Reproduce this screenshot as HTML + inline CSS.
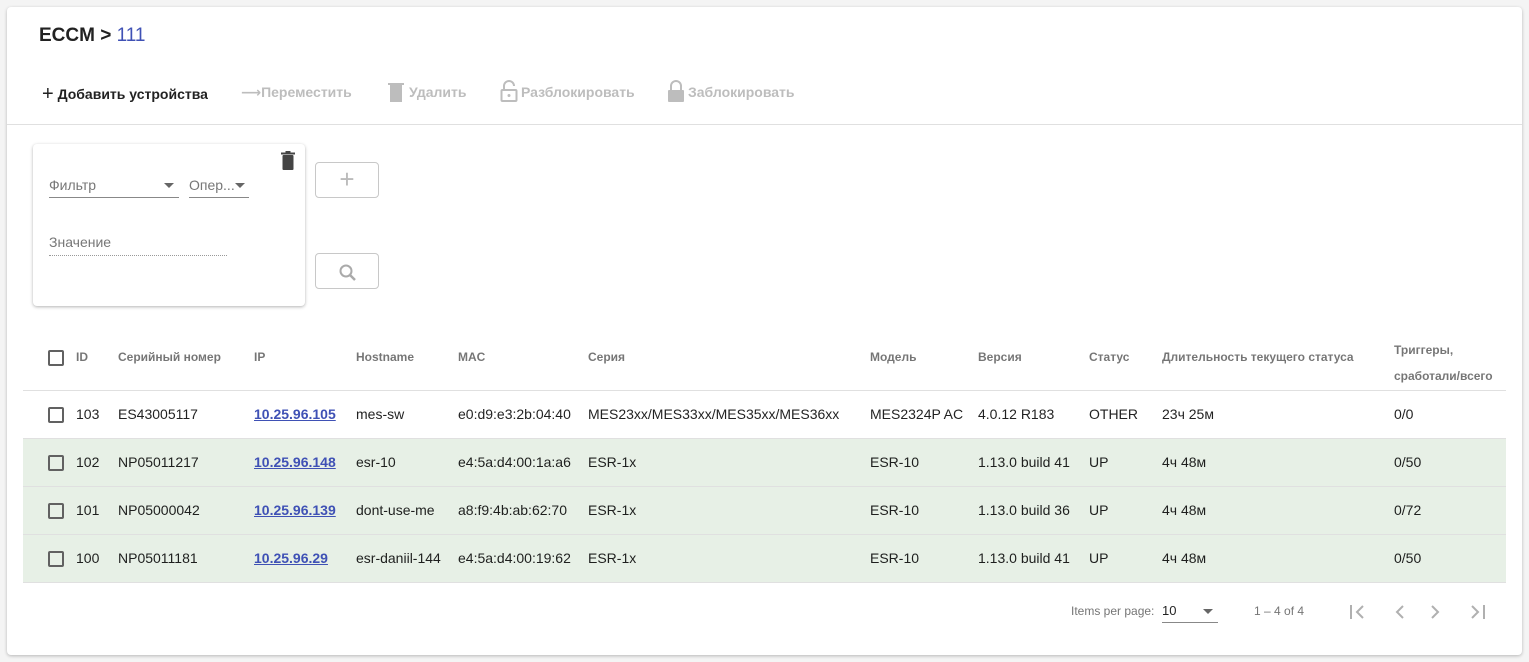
<!DOCTYPE html>
<html><head><meta charset="utf-8"><style>
*{margin:0;padding:0;box-sizing:border-box}
body{width:1529px;height:662px;background:#f4f4f4;font-family:"Liberation Sans","DejaVu Sans",sans-serif;position:relative;overflow:hidden;color:rgba(0,0,0,.87)}
.card{position:absolute;left:7px;top:7px;width:1515px;height:648px;background:#fff;border-radius:4px;box-shadow:0 1px 3px rgba(0,0,0,.25)}
.a{position:absolute;white-space:nowrap}
.tb{font-size:14px;font-weight:bold;color:#bdbdbd;top:84px}
.hd{font-size:12px;color:rgba(0,0,0,.54);font-weight:bold}
.row{position:absolute;left:23px;width:1483px;height:48px;border-bottom:1px solid #e0e0e0}
.g{background:#e7f0e6}
.c{position:absolute;top:15px;font-size:14px;white-space:nowrap}
.cb{position:absolute;left:25px;top:16px;width:16px;height:16px;border:2px solid #616161;border-radius:2px}
.ip{color:#3f51b5;text-decoration:underline;font-weight:bold}
.btn{position:absolute;left:315px;width:64px;height:36px;border:1px solid #c8c8c8;border-radius:4px;background:#fff}
</style></head><body>
<div class="card"></div>
<div class="a" style="left:39px;top:25px;font-size:19px;font-weight:bold;color:#222">ECCM &gt; <span style="color:#3f51b5;font-weight:normal">111</span></div>
<div class="a" style="left:42px;top:82px;font-size:14px;font-weight:bold;color:#222"><span style="font-size:20px;font-weight:normal;position:relative;top:1px">+</span> Добавить устройства</div>
<div class="a tb" style="left:241px">⟶Переместить</div>
<svg class="a" style="left:388px;top:82px" width="16" height="20"><rect x="2" y="3" width="12" height="17" fill="#bdbdbd"/><rect x="0" y="1" width="16" height="2" fill="#bdbdbd"/></svg>
<div class="a tb" style="left:409px">Удалить</div>
<svg class="a" style="left:500px;top:80px" width="18" height="22"><path d="M4 10V6a5 5 0 0 1 10 0" stroke="#bdbdbd" stroke-width="2" fill="none"/><rect x="1.5" y="10" width="15" height="11" rx="1" stroke="#bdbdbd" stroke-width="2" fill="none"/><circle cx="9" cy="15.5" r="1.5" fill="#bdbdbd"/></svg>
<div class="a tb" style="left:521px">Разблокировать</div>
<svg class="a" style="left:667px;top:80px" width="18" height="22"><path d="M4 10V6a5 5 0 0 1 10 0V10" stroke="#bdbdbd" stroke-width="2" fill="none"/><rect x="1" y="10" width="16" height="12" rx="1" fill="#bdbdbd"/></svg>
<div class="a tb" style="left:688px">Заблокировать</div>
<div class="a" style="left:7px;top:124px;width:1515px;height:1px;background:#e0e0e0"></div>

<div class="a" style="left:33px;top:144px;width:272px;height:162px;background:#fff;border-radius:4px;box-shadow:0 1px 3px rgba(0,0,0,.3)"></div>
<svg class="a" style="left:281px;top:151px" width="14" height="19"><rect x="1.5" y="4" width="11" height="15" rx="1" fill="#444"/><rect x="0" y="1.5" width="14" height="2" fill="#444"/><rect x="4.5" y="0" width="5" height="2" fill="#444"/></svg>
<div class="a" style="left:49px;top:177px;font-size:14px;color:#777">Фильтр</div>
<div class="a" style="left:164px;top:183px;border:5px solid transparent;border-top-color:#666"></div>
<div class="a" style="left:49px;top:197px;width:130px;height:1px;background:#888"></div>
<div class="a" style="left:189px;top:177px;font-size:14px;color:#777">Опер...</div>
<div class="a" style="left:235px;top:183px;border:5px solid transparent;border-top-color:#666"></div>
<div class="a" style="left:189px;top:197px;width:60px;height:1px;background:#888"></div>
<div class="a" style="left:49px;top:234px;font-size:14px;color:#777">Значение</div>
<div class="a" style="left:49px;top:255px;width:178px;border-top:1px dotted #999"></div>
<div class="btn" style="top:162px;text-align:center;font-size:26px;color:#bbb;line-height:32px">+</div>
<div class="btn" style="top:253px"><svg style="position:absolute;left:22px;top:9px" width="20" height="20"><circle cx="8" cy="8" r="5.5" stroke="#aaa" stroke-width="2" fill="none"/><path d="M12 12l5 5" stroke="#aaa" stroke-width="2.5"/></svg></div>

<div class="row" style="top:330px;height:61px">
<div class="cb" style="top:20px"></div>
<div class="a hd" style="left:53px;top:20px">ID</div>
<div class="a hd" style="left:95px;top:20px">Серийный номер</div>
<div class="a hd" style="left:231px;top:20px">IP</div>
<div class="a hd" style="left:333px;top:20px">Hostname</div>
<div class="a hd" style="left:435px;top:20px">MAC</div>
<div class="a hd" style="left:565px;top:20px">Серия</div>
<div class="a hd" style="left:847px;top:20px">Модель</div>
<div class="a hd" style="left:955px;top:20px">Версия</div>
<div class="a hd" style="left:1066px;top:20px">Статус</div>
<div class="a hd" style="left:1139px;top:20px">Длительность текущего статуса</div>
<div class="a hd" style="left:1371px;top:7px;line-height:26px">Триггеры,<br>сработали/всего</div>
</div>

<div class="row" style="top:391px"><div class="cb"></div><div class="c" style="left:53px">103</div><div class="c" style="left:95px">ES43005117</div><div class="c ip" style="left:231px">10.25.96.105</div><div class="c" style="left:333px">mes-sw</div><div class="c" style="left:435px">e0:d9:e3:2b:04:40</div><div class="c" style="left:565px">MES23xx/MES33xx/MES35xx/MES36xx</div><div class="c" style="left:847px">MES2324P AC</div><div class="c" style="left:955px">4.0.12 R183</div><div class="c" style="left:1066px">OTHER</div><div class="c" style="left:1139px">23ч 25м</div><div class="c" style="left:1371px">0/0</div></div>
<div class="row g" style="top:439px"><div class="cb"></div><div class="c" style="left:53px">102</div><div class="c" style="left:95px">NP05011217</div><div class="c ip" style="left:231px">10.25.96.148</div><div class="c" style="left:333px">esr-10</div><div class="c" style="left:435px">e4:5a:d4:00:1a:a6</div><div class="c" style="left:565px">ESR-1x</div><div class="c" style="left:847px">ESR-10</div><div class="c" style="left:955px">1.13.0 build 41</div><div class="c" style="left:1066px">UP</div><div class="c" style="left:1139px">4ч 48м</div><div class="c" style="left:1371px">0/50</div></div>
<div class="row g" style="top:487px"><div class="cb"></div><div class="c" style="left:53px">101</div><div class="c" style="left:95px">NP05000042</div><div class="c ip" style="left:231px">10.25.96.139</div><div class="c" style="left:333px">dont-use-me</div><div class="c" style="left:435px">a8:f9:4b:ab:62:70</div><div class="c" style="left:565px">ESR-1x</div><div class="c" style="left:847px">ESR-10</div><div class="c" style="left:955px">1.13.0 build 36</div><div class="c" style="left:1066px">UP</div><div class="c" style="left:1139px">4ч 48м</div><div class="c" style="left:1371px">0/72</div></div>
<div class="row g" style="top:535px"><div class="cb"></div><div class="c" style="left:53px">100</div><div class="c" style="left:95px">NP05011181</div><div class="c ip" style="left:231px">10.25.96.29</div><div class="c" style="left:333px">esr-daniil-144</div><div class="c" style="left:435px">e4:5a:d4:00:19:62</div><div class="c" style="left:565px">ESR-1x</div><div class="c" style="left:847px">ESR-10</div><div class="c" style="left:955px">1.13.0 build 41</div><div class="c" style="left:1066px">UP</div><div class="c" style="left:1139px">4ч 48м</div><div class="c" style="left:1371px">0/50</div></div>

<div class="a" style="left:1071px;top:604px;font-size:12px;color:#757575">Items per page:</div>
<div class="a" style="left:1162px;top:603px;font-size:13px">10</div>
<div class="a" style="left:1203px;top:609px;border:5px solid transparent;border-top-color:#666"></div>
<div class="a" style="left:1162px;top:622px;width:56px;height:1px;background:#888"></div>
<div class="a" style="left:1254px;top:604px;font-size:12px;color:#757575">1 – 4 of 4</div>
<svg class="a" style="left:1345px;top:602px" width="150" height="20" stroke="#b0b0b0" stroke-width="2" fill="none"><path d="M6 3v14M18 4l-6 6 6 6"/><path d="M58 4l-6 6 6 6"/><path d="M87 4l6 6-6 6"/><path d="M127 4l6 6-6 6M139 3v14"/></svg>
</body></html>
